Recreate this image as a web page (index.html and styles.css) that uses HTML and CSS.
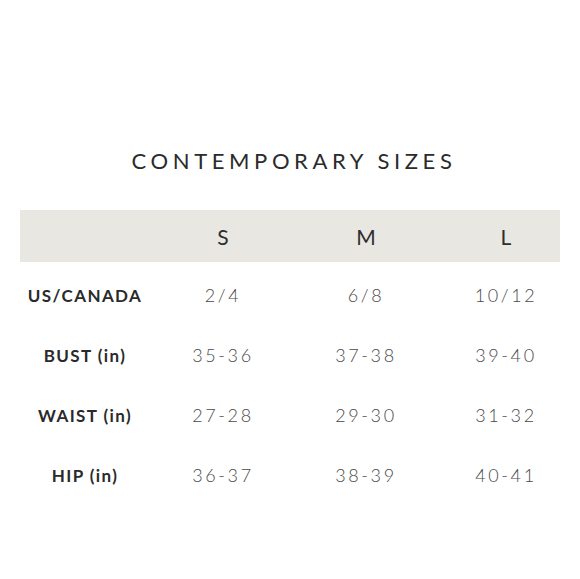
FILE: index.html
```html
<!DOCTYPE html>
<html>
<head>
<meta charset="utf-8">
<link rel="stylesheet" href="styles.css">
</head>
<body>
<div class="page">
  <h1 class="title">CONTEMPORARY SIZES</h1>
  <div class="chart">
    <div class="row head">
      <div class="cell"></div>
      <div class="cell">S</div>
      <div class="cell">M</div>
      <div class="cell">L</div>
    </div>
    <div class="row">
      <div class="cell label">US/CANADA</div>
      <div class="cell val">2/4</div>
      <div class="cell val">6/8</div>
      <div class="cell val">10/12</div>
    </div>
    <div class="row">
      <div class="cell label">BUST (in)</div>
      <div class="cell val">35-36</div>
      <div class="cell val">37-38</div>
      <div class="cell val">39-40</div>
    </div>
    <div class="row">
      <div class="cell label">WAIST (in)</div>
      <div class="cell val">27-28</div>
      <div class="cell val">29-30</div>
      <div class="cell val">31-32</div>
    </div>
    <div class="row">
      <div class="cell label">HIP (in)</div>
      <div class="cell val">36-37</div>
      <div class="cell val">38-39</div>
      <div class="cell val">40-41</div>
    </div>
  </div>
</div>
</body>
</html>
```
FILE: styles.css
```css
html, body {
  margin: 0;
  padding: 0;
  background: #ffffff;
}
.page {
  width: 580px;
  height: 579px;
  padding-top: 146px;
  box-sizing: border-box;
  font-family: Lato, "Noto Sans", sans-serif;
  color: #2b2b2b;
}
.title {
  margin: 0;
  text-align: center;
  font-size: 22px;
  font-weight: 400;
  letter-spacing: 4.6px;
  line-height: 30px;
  padding-left: 8px;
}
.chart {
  margin: 34px 20px 0 20px;
  width: 540px;
}
.row {
  display: grid;
  grid-template-columns: 130px 146px 140px 124px;
  height: 60px;
  align-items: center;
}
.row.head {
  height: 52px;
  background: #e9e7e2;
  margin-bottom: 3px;
}
.cell {
  text-align: center;
}
.cell:last-child {
  padding-left: 16px;
}
.head .cell {
  font-size: 21px;
  font-weight: 400;
  color: #2e2e2e;
}
.label {
  font-size: 17px;
  font-weight: 700;
  letter-spacing: 1.4px;
  color: #2a2a2a;
}
.val {
  font-size: 18px;
  font-weight: 300;
  letter-spacing: 2.6px;
  color: #4a4a4a;
}
```
